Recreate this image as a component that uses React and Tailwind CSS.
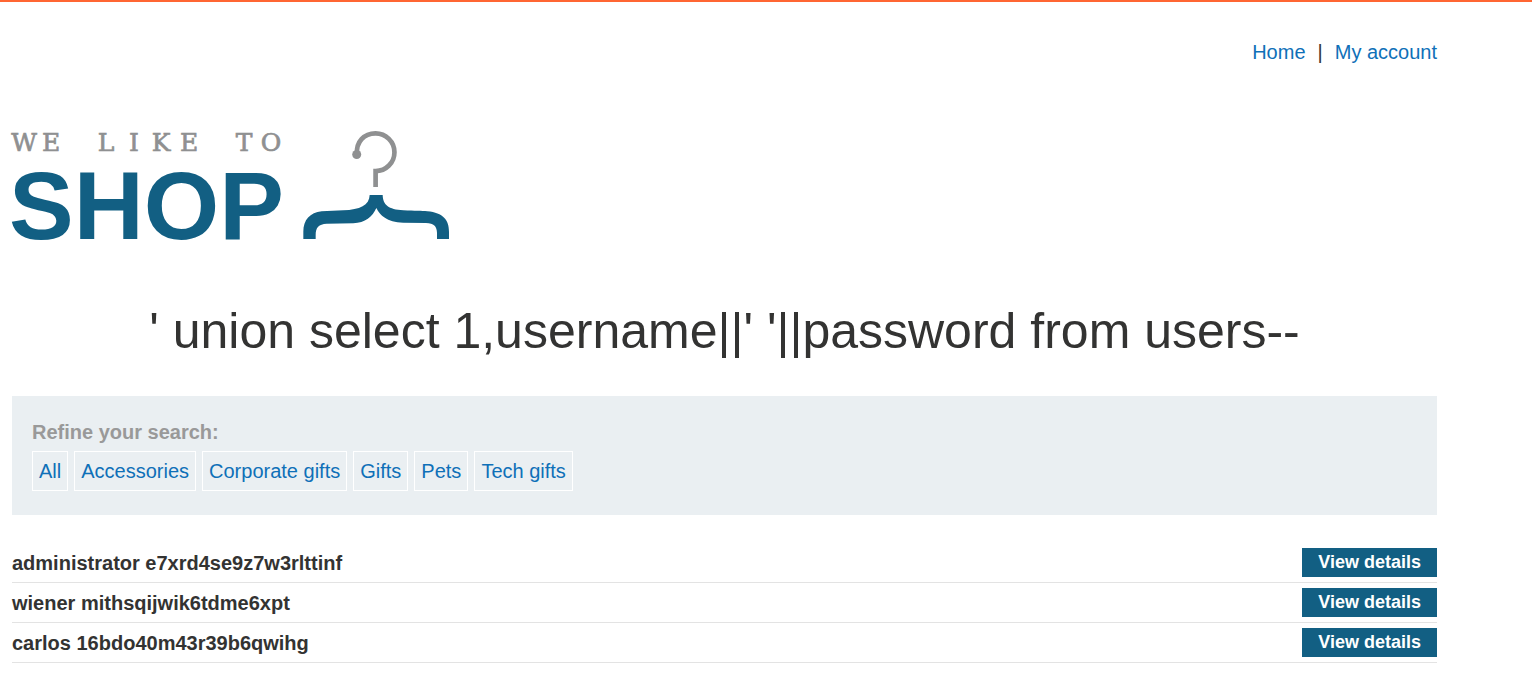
const categories = ["All", "Accessories", "Corporate gifts", "Gifts", "Pets", "Tech gifts"];

const products = [
  "administrator e7xrd4se9z7w3rlttinf",
  "wiener mithsqijwik6tdme6xpt",
  "carlos 16bdo40m43r39b6qwihg",
];

function Logo() {
  return (
    <svg viewBox="0 122 452 122" className="-ml-3 block h-[122px] w-[452px] overflow-visible" role="img" aria-label="We like to shop">
      <text
        x="24 51 79 106 134 161 189 216 244 271"
        y="151"
        textAnchor="middle"
        stroke="#8f9091"
        strokeWidth="0.7"
        className="fill-[#8f9091] font-['DejaVu_Serif',serif] text-[25px]"
      >
        WE LIKE TO
      </text>
      <text x="9" y="239" className="fill-[#125f83] font-['Liberation_Sans',Arial,sans-serif] text-[97px] font-bold">
        SHOP
      </text>
      <path d="M357 154 C356 142 364 133.300 375.500 133.300 A18.900 18.900 0 0 1 375.600 171.100 V187" fill="none" stroke="#8f9091" strokeWidth="4.700" />
      <circle cx="356.700" cy="154.500" r="4.500" fill="#8f9091" />
      <path
        transform="translate(230 120) scale(.33333)"
        fill="#125f83"
        d="M419 225H458C459 255 475 268 520 271C555 273 575 272 592 274C640 279 657 300 657 335V357H621V338C620 318 612 310 588 309L520 308C470 306 450 286 439 264C428 290 405 308 370 310L290 311C266 313 257 322 257 345V357H220V335C220 300 240 278 275 274L340 271C390 269 418 256 419 225Z"
      />
    </svg>
  );
}

export default function App() {
  return (
    <div className="border-t-2 border-[#ff6633] bg-white font-['Liberation_Sans',Arial,sans-serif] text-xl leading-6 text-[#333332]">
      <div className="mr-[95px] ml-3 pb-7">
        <nav className="flex justify-end gap-3 pt-[38px]">
          <a href="#home" className="text-[#0f70b8]">Home</a>
          <span>|</span>
          <a href="#account" className="text-[#0f70b8]">My account</a>
        </nav>

        <header className="pt-[58px]">
          <Logo />
        </header>

        <h1 className="pt-[58px] text-center text-[50px] leading-[58px]">
          ' union select 1,username||' '||password from users--
        </h1>

        <section className="mt-9 bg-[#eaeff2] px-5 pt-6 pb-6">
          <h2 className="font-bold text-[#999999]">Refine your search:</h2>
          <div className="mt-[7px] flex flex-wrap gap-1.5">
            {categories.map((name) => (
              <a key={name} href="#filter" className="border border-white px-1.5 py-[7px] text-[#0f70b8]">
                {name}
              </a>
            ))}
          </div>
        </section>

        <table className="mt-7 w-full border-separate border-spacing-0">
          <tbody>
            {products.map((name) => (
              <tr key={name} className="h-10">
                <th scope="row" className="border-b border-[#e3e3e3] p-0 text-left font-bold">{name}</th>
                <td className="border-b border-[#e3e3e3] p-0 text-right">
                  <a
                    href="#details"
                    className="inline-block bg-[#125f83] px-4 text-center align-middle text-lg leading-[29px] font-bold text-white"
                  >
                    View details
                  </a>
                </td>
              </tr>
            ))}
          </tbody>
        </table>
      </div>
    </div>
  );
}
